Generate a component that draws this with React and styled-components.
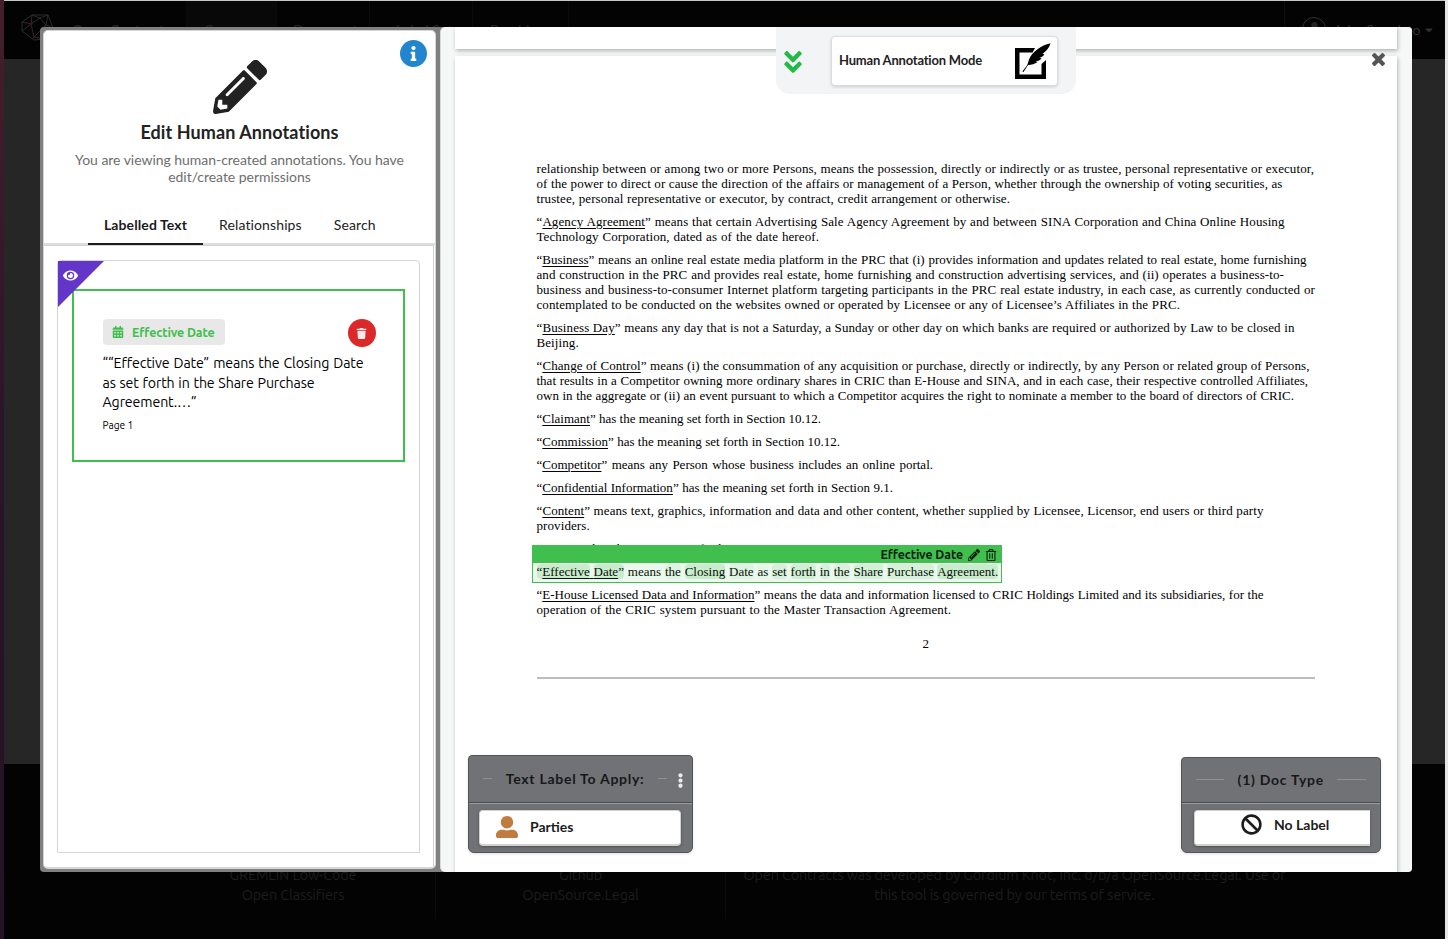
import React from "react";
import styled, { createGlobalStyle, css } from "styled-components";
import {
  FaPencilAlt,
  FaInfo,
  FaEye,
  FaCalendarAlt,
  FaTrash,
  FaRegTrashAlt,
  FaUserAlt,
  FaBan,
  FaAngleDoubleDown,
  FaEllipsisV,
  FaCaretDown,
  FaUser,
} from "react-icons/fa";

const ui = `Lato, "Liberation Sans", sans-serif`;
const human = `Ubuntu, "Noto Sans", sans-serif`;
const green = "#41bf4e";

const GlobalStyle = createGlobalStyle`
  * { box-sizing: border-box; }
  body { margin: 0; overflow: hidden; background: #000; font-family: ${ui}; }
  svg { display: block; }
`;

/* ---------- application behind the dimmer ---------- */

const Screen = styled.div`
  position: relative;
  width: 1448px;
  height: 939px;
  overflow: hidden;
  display: flex;
  background: linear-gradient(#451f2b, #2c1428 45%, #241224);
`;
const Site = styled.div`
  width: 1441px;
  margin-left: 4px;
  border-top: 1px solid #c3c7c5;
  display: flex;
  flex-direction: column;
  background: #262626;
`;
const WindowEdge = styled.div`
  flex: 1;
  background: #e6e6e6;
`;
const NavBar = styled.header`
  height: 58px;
  background: #030303;
  display: flex;
  color: #242424;
  font-size: 14px;
  line-height: 20px;
`;
const NavItem = styled.div`
  width: ${(p) => p.$w}px;
  padding: 19px 0 0 ${(p) => p.$pad || 17}px;
  border-right: 1px solid #0b0b0b;
  background: ${(p) => (p.$active ? "#080808" : "transparent")};
  white-space: nowrap;
`;
const Brand = styled(NavItem)`
  display: flex;
  gap: 18px;
  padding: 12px 0 0 17px;
  font-weight: 700;
  span { padding-top: 7px; }
`;
const UserItem = styled.div`
  margin-left: auto;
  width: 161px;
  border-left: 1px solid #0d0d0d;
  padding: 16px 0 0 17px;
  display: flex;
  gap: 8px;
  white-space: nowrap;
  span { padding-top: 3px; color: #303030; letter-spacing: -0.1px; }
  > svg { margin: 7px 0 0 -5px; color: #303030; }
`;
const Avatar = styled.div`
  width: 24px;
  height: 24px;
  border: 1px solid #303030;
  border-radius: 50%;
  display: flex;
  justify-content: center;
  padding-top: 4px;
`;
const SiteBody = styled.div`
  flex: 1;
`;
const Footer = styled.footer`
  height: 175px;
  background: #030303;
  color: #1d1d1d;
  font-family: ${human};
  font-size: 14.4px;
  letter-spacing: -0.1px;
  line-height: 20px;
  text-align: center;
  padding: 101px 0 0 147px;
  display: flex;
`;
const FooterCol = styled.div`
  width: ${(p) => p.$w}px;
  height: 54px;
  border-right: 1px solid ${(p) => (p.$last ? "transparent" : "#0b0b0b")};
  white-space: nowrap;
`;

/* ---------- modal ---------- */

const Dimmer = styled.div`
  position: absolute;
  inset: 0;
  padding: 27px 36px 67px 40px;
  display: flex;
`;
const Modal = styled.div`
  flex: 1;
  display: flex;
  border-radius: 4px;
  overflow: hidden;
  background: #808080;
`;
const Sidebar = styled.aside`
  width: 393px;
  margin: 3px 0 3px 3px;
  border: 1px solid #d5d6d6;
  border-bottom: 2px solid #d5d6d6;
  border-radius: 5px;
  background: #fff;
  display: flex;
  flex-direction: column;
  position: relative;
`;
const InfoButton = styled.div`
  position: absolute;
  top: 9px;
  right: 8.5px;
  width: 27px;
  height: 27px;
  border-radius: 50%;
  background: #2185d0;
  color: #fff;
  display: flex;
  align-items: center;
  justify-content: center;
`;
const SideHead = styled.div`
  height: 182px;
  display: flex;
  flex-direction: column;
  align-items: center;
  color: #222;
  padding-top: 29px;
`;
const SideTitle = styled.h2`
  margin: 6px 0 0;
  font-size: 18px;
  font-weight: 700;
  line-height: 24px;
  letter-spacing: 0.09px;
`;
const SideNote = styled.p`
  margin: 7px 0 0;
  width: 350px;
  color: #6e6e6e;
  font-size: 14px;
  line-height: 17px;
  letter-spacing: -0.04px;
  text-align: center;
`;
const Tabs = styled.nav`
  height: 32px;
  display: flex;
  padding-left: 44px;
  border-bottom: 2px solid #dcdddd;
`;
const Tab = styled.div`
  height: 32px;
  padding: 2px 16px 0;
  font-size: 14px;
  line-height: 20px;
  color: #222;
  border-bottom: 2px solid transparent;
  letter-spacing: 0.12px;
  ${(p) =>
    p.$active &&
    css`
      font-weight: 700;
      color: #1b1c1d;
      border-color: #1b1c1d;
      letter-spacing: 0.1px;
    `}
`;
const TabPane = styled.div`
  flex: 1;
  border: 1px solid #d4d4d5;
  border-width: 1px 1px 0 0;
  margin-right: 1px;
  padding: 14px 13px 14px 13px;
  display: flex;
`;
const Feed = styled.section`
  flex: 1;
  border: 1px solid #d4d4d5;
  border-radius: 4px 4px 0 0;
  padding: 28px 14px 0;
  position: relative;
`;
const Corner = styled.div`
  position: absolute;
  top: 0;
  left: 0;
  width: 46px;
  height: 46px;
  background: #6435c9;
  clip-path: polygon(0 0, 100% 0, 0 100%);
  color: #fff;
  padding: 7px 0 0 5px;
`;
const Card = styled.article`
  height: 173px;
  border: 2px solid ${green};
  padding: 28px 27.5px 0 28.5px;
  font-family: ${human};
  color: #000;
`;
const CardTop = styled.div`
  display: flex;
  justify-content: space-between;
  height: 35px;
`;
const Tag = styled.div`
  width: 122.5px;
  height: 26px;
  border-radius: 4px;
  background: #e8e8e8;
  color: ${green};
  display: flex;
  align-items: center;
  gap: 8px;
  padding-left: 9.5px;
  font-size: 12.4px;
  font-weight: 700;
  letter-spacing: -0.1px;
  white-space: nowrap;
`;
const DeleteButton = styled.div`
  width: 28px;
  height: 28px;
  border-radius: 50%;
  background: #db2828;
  color: #ffe9e9;
  display: flex;
  align-items: center;
  justify-content: center;
`;
const Quote = styled.div`
  font-size: 14.2px;
  line-height: 19.5px;
  letter-spacing: -0.12px;
  white-space: nowrap;
`;
const FitLine = styled.div`
  width: ${(p) => p.$w}px;
  white-space: nowrap;
  text-align: justify;
  text-align-last: justify;
  ${(p) => p.$tight && "letter-spacing: 0;"}
`;
const PageNo = styled.div`
  margin-top: 4.5px;
  font-size: 10.2px;
  line-height: 16px;
`;

/* ---------- document viewer ---------- */

const Viewer = styled.main`
  width: 972px;
  margin-left: auto;
  padding: 0 14px 0 15px;
  border-left: 1px solid #d8dada;
  border-radius: 5px 0 0 5px;
  background: #f5f8f7;
  position: relative;
  display: flex;
  flex-direction: column;
  gap: 7px;
`;
const Sheet = styled.div`
  width: 942px;
  margin-left: -1px;
  height: ${(p) => p.$h}px;
  flex: none;
  background: #fff;
  box-shadow: 1px 2px 4px rgba(34, 50, 45, 0.32);
`;
const Page = styled(Sheet)`
  padding: 104.5px 82px 0 81.5px;
  position: relative;
  font-family: "Liberation Serif", serif;
  font-size: 13px;
  line-height: 15px;
  letter-spacing: 0.09px;
  color: #000;
`;
const Para = styled.div`
  margin-bottom: 8px;
  u { text-underline-offset: 2px; text-decoration-thickness: 1px; }
`;
const Token = styled.span`
  background: rgba(65, 191, 78, ${(p) => p.$a});
  border-radius: 4px;
`;
const Folio = styled.div`
  text-align: center;
  padding-top: 11px;
`;
const Rule = styled.div`
  height: 2px;
  margin: 26px 0 0;
  background: #bdbdbd;
`;
const Annotation = styled.div`
  position: absolute;
  left: 77px;
  top: 489px;
  width: 470px;
  height: 38px;
  border: 1px solid ${green};
  background: rgba(65, 191, 78, 0.1);
`;
const AnnotationBar = styled.div`
  height: 17px;
  background: ${green};
  color: #0e2211;
  display: flex;
  align-items: center;
  justify-content: flex-end;
  padding-right: 4px;
  font-family: ${human};
  font-size: 12.4px;
  font-weight: 700;
  letter-spacing: -0.1px;
  svg:first-of-type { margin: 0 5.5px 0 4.5px; }
`;
const ModeBar = styled.div`
  position: absolute;
  top: 0;
  left: 335px;
  width: 300px;
  height: 67px;
  border-radius: 0 0 14px 14px;
  background: #f3f4f6;
  color: #21ba45;
  display: flex;
  padding: 9px 18px 0 2.5px;
  justify-content: space-between;
  > svg { margin-top: 11.5px; }
`;
const ModeCard = styled.div`
  width: 227px;
  height: 50px;
  border: 1px solid #dcdddf;
  border-radius: 4px;
  background: #fff;
  box-shadow: 0 1px 3px rgba(0, 0, 0, 0.16);
  display: flex;
  justify-content: space-between;
  align-items: center;
  padding: 0 6px 2px 7px;
  font-size: 13px;
  font-weight: 700;
  color: #222;
  letter-spacing: -0.2px;
  svg { margin-top: 1px; }
`;
const CloseMark = styled.svg`
  position: absolute;
  top: 26px;
  right: 27px;
`;
const LabelBox = styled.div`
  position: absolute;
  ${(p) => p.$side}: ${(p) => p.$off}px;
  bottom: 19px;
  width: ${(p) => p.$w}px;
  height: ${(p) => p.$h}px;
  border: 1px solid #545556;
  border-radius: 4px 4px 6px 6px;
  background: #717275;
  box-shadow: 0 1px 3px rgba(0, 0, 0, 0.12);
  display: flex;
  flex-direction: column;
`;
const LabelHead = styled.div`
  flex: 1;
  display: flex;
  align-items: center;
  justify-content: space-between;
  padding: 0 ${(p) => p.$r}px 2px 14px;
  border-bottom: 1px solid #4b4c4d;
  font-size: 14px;
  font-weight: 700;
  letter-spacing: 0.73px;
  color: #17181a;
  white-space: nowrap;
  svg { margin: 5px 0 0 -8px; }
`;
const Dash = styled.i`
  width: ${(p) => p.$w}px;
  height: 1px;
  background: #8e8f91;
`;
const LabelBody = styled.div`
  height: 49px;
  border-top: 1px solid #9a9b9c;
  padding: 6px ${(p) => p.$r}px 0 ${(p) => p.$l}px;
`;
const LabelButton = styled.div`
  height: 36px;
  border: 1px solid #d0d1d2;
  border-bottom-width: 2px;
  border-right-width: ${(p) => (p.$cut ? 0 : 1)}px;
  border-radius: ${(p) => (p.$cut ? "4px 0 0 4px" : "4px")};
  background: #fff;
  box-shadow: 0 1px 3px rgba(0, 0, 0, 0.3);
  display: flex;
  align-items: center;
  gap: 12px;
  padding: ${(p) => p.$pad};
  color: #1b1c1d;
  font-size: 14px;
  font-weight: 700;
`;

/* Each line: width, text, underlined term, and whether it is set without tracking. */
const paragraphs = [
  [
    [777.5, "relationship between or among two or more Persons, means the possession, directly or indirectly or as trustee, personal representative or executor,"],
    [746, "of the power to direct or cause the direction of the affairs or management of a Person, whether through the ownership of voting securities, as"],
    [473.5, "trustee, personal representative or executor, by contract, credit arrangement or otherwise."],
  ],
  [
    [748, "means that certain Advertising Sale Agency Agreement by and between SINA Corporation and China Online Housing", "Agency Agreement"],
    [282.5, "Technology Corporation, dated as of the date hereof."],
  ],
  [
    [770, "means an online real estate media platform in the PRC that (i) provides information and updates related to real estate, home furnishing", "Business", true],
    [747.5, "and construction in the PRC and provides real estate, home furnishing and construction advertising services, and (ii) operates a business-to-"],
    [778.5, "business and business-to-consumer Internet platform targeting participants in the PRC real estate industry, in each case, as currently conducted or"],
    [643.5, "contemplated to be conducted on the websites owned or operated by Licensee or any of Licensee’s Affiliates in the PRC."],
  ],
  [
    [758, "means any day that is not a Saturday, a Sunday or other day on which banks are required or authorized by Law to be closed in", "Business Day"],
    [40, "Beijing."],
  ],
  [
    [773, "means (i) the consummation of any acquisition or purchase, directly or indirectly, by any Person or related group of Persons,", "Change of Control"],
    [771.5, "that results in a Competitor owning more ordinary shares in CRIC than E-House and SINA, and in each case, their respective controlled Affiliates,", null, true],
    [757.5, "own in the aggregate or (ii) an event pursuant to which a Competitor acquires the right to nominate a member to the board of directors of CRIC.", null, true],
  ],
  [[284.5, "has the meaning set forth in Section 10.12.", "Claimant", true]],
  [[303.5, "has the meaning set forth in Section 10.12.", "Commission", true]],
  [[396.5, "means any Person whose business includes an online portal.", "Competitor", true]],
  [[356.5, "has the meaning set forth in Section 9.1.", "Confidential Information", true]],
  [
    [727, "means text, graphics, information and data and other content, whether supplied by Licensee, Licensor, end users or third party", "Content"],
    [54, "providers."],
  ],
  [[281, "has the meaning set forth in Section 10.12.", "Dispute", true]],
];
const closing = [
  [727, "means the data and information licensed to CRIC Holdings Limited and its subsidiaries, for the", "E-House Licensed Data and Information", true],
  [414.5, "operation of the CRIC system pursuant to the Master Transaction Agreement."],
];
const tokens = [
  ["means", 0], ["the", 0.08], ["Closing", 0.2], ["Date", 0.08], ["as", 0.04], ["set", 0.12],
  ["forth", 0.16], ["in", 0.12], ["the", 0.1], ["Share", 0.14], ["Purchase", 0.12], ["Agreement.", 0.2],
];

const Paragraph = ({ lines }) => (
  <Para>
    {lines.map(([w, text, term, tight], i) => (
      <FitLine $w={w} $tight={tight} key={i}>
        {term && <>“<u>{term}</u>” </>}
        {text}
      </FitLine>
    ))}
  </Para>
);

const Polyhedron = () => (
  <svg width="33" height="30" viewBox="0 0 33 30" fill="none" stroke="#2b2b2b">
    <path d="M1 9 11 2h16l5 13-8 11-11 1L1 18ZM1 9l9 2 1-9 8 3 8-3-2 10 7 3M10 11l9-6 6 7-12 12-3-13L1 18M13 24l11 2 1-14" />
    <circle cx="10" cy="11" r="1.5" fill="#4a1111" stroke="none" />
    <circle cx="13" cy="24" r="1.5" fill="#4a1111" stroke="none" />
  </svg>
);

const QuillBox = () => (
  <svg width="36" height="36" viewBox="0 0 36 36">
    <path d="M20 5H0v31h31V17l-4.500 4v10.500H4.500V9.500h13Z" fill="#000" />
    <path d="M35.500.3C26 2.500 17.500 8.500 14 16.500c-.8 2.300-1 4-2.200 6.200L7.300 28.500l1.200.6 4.600-7c3.500-.2 6.500-1 9.500-3l-2-.6c2.300-.4 4.800-1.400 6-3.200l-2.200-.4c2.300-.7 4-2 5-3.700l-2-.3C30.500 9 34.500 4.500 35.500.3Z" fill="#000" />
  </svg>
);

export default function App() {
  return (
    <>
      <GlobalStyle />
      <Screen>
        <Site>
          <NavBar>
            <Brand $w={183}>
              <Polyhedron />
              <span>Open Contracts</span>
            </Brand>
            <NavItem $w={90} $active>Corpuses</NavItem>
            <NavItem $w={93} $pad={16}>Documents</NavItem>
            <NavItem $w={103} $pad={26}>Label Sets</NavItem>
            <NavItem $w={96}>Providers</NavItem>
            <UserItem>
              <Avatar><FaUser size={13} /></Avatar>
              <span>John Scrudato</span>
              <FaCaretDown size={12} />
            </UserItem>
          </NavBar>
          <SiteBody />
          <Footer>
            <FooterCol $w={285}>GREMLIN Low-Code<br />Open Classifiers</FooterCol>
            <FooterCol $w={290}>Github<br />OpenSource.Legal</FooterCol>
            <FooterCol $w={578} $last>
              Open Contracts was developed by Gordium Knot, Inc. d/b/a OpenSource.Legal. Use of<br />
              this tool is governed by our terms of service.
            </FooterCol>
          </Footer>
        </Site>
        <WindowEdge />

        <Dimmer>
          <Modal>
            <Sidebar>
              <InfoButton><FaInfo size={15} /></InfoButton>
              <SideHead>
                <FaPencilAlt size={54} />
                <SideTitle>Edit Human Annotations</SideTitle>
                <SideNote>You are viewing human-created annotations. You have edit/create permissions</SideNote>
              </SideHead>
              <Tabs>
                <Tab $active>Labelled Text</Tab>
                <Tab>Relationships</Tab>
                <Tab>Search</Tab>
              </Tabs>
              <TabPane>
                <Feed>
                  <Card>
                    <CardTop>
                      <Tag><FaCalendarAlt size={12} />Effective Date</Tag>
                      <DeleteButton><FaTrash size={11} /></DeleteButton>
                    </CardTop>
                    <Quote>
                      <FitLine $w={261}>““Effective Date” means the Closing Date</FitLine>
                      <FitLine $w={212}>as set forth in the Share Purchase</FitLine>
                      <FitLine $w={96}>Agreement.…”</FitLine>
                    </Quote>
                    <PageNo>Page 1</PageNo>
                  </Card>
                  <Corner><FaEye size={15} /></Corner>
                </Feed>
              </TabPane>
            </Sidebar>

            <Viewer>
              <Sheet $h={22} />
              <Page $h={830}>
                {paragraphs.map((lines, i) => <Paragraph lines={lines} key={i} />)}
                <Para>
                  <FitLine $w={461.5} $tight>
                    <Token $a={0.2}>“<u>Effective</u></Token><u> </u><Token $a={0.2}><u>Date</u>”</Token>
                    {tokens.map(([word, a], i) => (
                      <React.Fragment key={i}> <Token $a={a}>{word}</Token></React.Fragment>
                    ))}
                  </FitLine>
                </Para>
                <Paragraph lines={closing} />
                <Folio>2</Folio>
                <Rule />
                <Annotation>
                  <AnnotationBar>
                    Effective Date
                    <FaPencilAlt size={12} />
                    <FaRegTrashAlt size={12} />
                  </AnnotationBar>
                </Annotation>
              </Page>

              <ModeBar>
                <FaAngleDoubleDown size={28} />
                <ModeCard>
                  Human Annotation Mode
                  <QuillBox />
                </ModeCard>
              </ModeBar>
              <CloseMark width="13" height="13" viewBox="110 366 1188 1188">
                <path
                  fill="#555"
                  d="M1298 1322q0 40-28 68l-136 136q-28 28-68 28t-68-28l-294-294-294 294q-28 28-68 28t-68-28l-136-136q-28-28-28-68t28-68l294-294-294-294q-28-28-28-68t28-68l136-136q28-28 68-28t68 28l294 294 294-294q28-28 68-28t68 28l136 136q28 28 28 68t-28 68l-294 294 294 294q28 28 28 68z"
                />
              </CloseMark>

              <LabelBox $side="left" $off={27} $w={225} $h={98}>
                <LabelHead $r={4}>
                  <Dash $w={9} />
                  Text Label To Apply:
                  <Dash $w={9} />
                  <FaEllipsisV size={15} color="#ececec" />
                </LabelHead>
                <LabelBody $l={10} $r={11}>
                  <LabelButton $pad="0 0 2px 16px">
                    <FaUserAlt size={22} color="#c07b3e" />
                    Parties
                  </LabelButton>
                </LabelBody>
              </LabelBox>
              <LabelBox $side="right" $off={31} $w={200} $h={96}>
                <LabelHead $r={13.5}>
                  <Dash $w={28} />
                  (1) Doc Type
                  <Dash $w={29} />
                </LabelHead>
                <LabelBody $l={12} $r={10}>
                  <LabelButton $cut $pad="0 0 6px 46px">
                    <FaBan size={21} />
                    No Label
                  </LabelButton>
                </LabelBody>
              </LabelBox>
            </Viewer>
          </Modal>
        </Dimmer>
      </Screen>
    </>
  );
}
